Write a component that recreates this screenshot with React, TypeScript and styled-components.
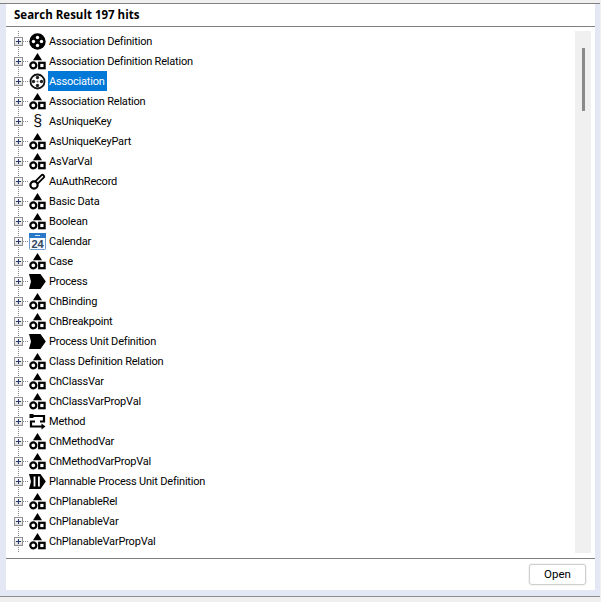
import React from 'react';
import styled, { createGlobalStyle } from 'styled-components';

const GlobalStyle = createGlobalStyle`
  html, body {
    margin: 0;
    padding: 0;
    background: #f0f0f0;
  }
`;

const Window = styled.div`
  width: 601px;
  height: 602px;
  box-sizing: border-box;
  display: flex;
  flex-direction: column;
  background: #f0f0f0;
  font-family: "Roboto", "Noto Sans", sans-serif;
  overflow: hidden;
`;

const Frame = styled.div`
  margin-top: 3px;
  height: 594px;
  box-sizing: border-box;
  border-top: 1px solid #808080;
  border-bottom: 1px solid #8c8c8c;
  background: #e3e8f4;
  padding: 0 5px 6px 6px;
  margin-right: 1px;
  display: flex;
`;

const Panel = styled.div`
  flex: 1;
  background: #fff;
  display: flex;
  flex-direction: column;
`;

const TitleBar = styled.div`
  height: 23px;
  box-sizing: border-box;
  border-bottom: 1px solid #808080;
  padding: 3px 0 0 8px;
  font-family: "Open Sans", sans-serif;
  font-size: 11.5px;
  line-height: 16px;
  font-weight: 700;
  color: #000;
`;

const Body = styled.div`
  flex: 1;
  display: flex;
  justify-content: space-between;
  padding: 4px 4px 4px 8px;
  border-bottom: 1px solid #808080;
  min-height: 0;
`;

const Tree = styled.ul`
  list-style: none;
  margin: 0;
  padding: 0;
  display: flex;
  flex-direction: column;
`;

const Row = styled.li`
  height: 20px;
  display: flex;
  align-items: center;
  font-size: 11px;
  letter-spacing: -0.2px;
  color: #000;
  white-space: nowrap;
`;

const Expander = styled.span`
  width: 15px;
  height: 20px;
  flex: none;
  display: flex;
  align-items: center;
  background-image:
    repeating-linear-gradient(to bottom, #8a8a8a 0 1px, transparent 1px 2px),
    repeating-linear-gradient(to right, #8a8a8a 0 1px, transparent 1px 2px);
  background-size: 1px 100%, 6px 1px;
  background-position: 4px 0, 9px 10px;
  background-repeat: no-repeat;
`;

const PlusBox = styled.span`
  width: 9px;
  height: 9px;
  box-sizing: border-box;
  border: 1px solid #8e8f8f;
  background: linear-gradient(#fdfdfd, #dcdcdc);
  margin-top: 1px;
  display: flex;
  align-items: center;
  justify-content: center;
  position: relative;

  &::before {
    content: '';
    width: 5px;
    height: 1px;
    background: #24356b;
  }

  &::after {
    content: '';
    position: absolute;
    width: 1px;
    height: 5px;
    left: 3px;
    top: 1px;
    background: #24356b;
  }
`;

const IconSlot = styled.span`
  width: 17px;
  height: 17px;
  flex: none;
  display: flex;
  align-items: center;
  justify-content: center;
  font-family: "Liberation Sans", sans-serif;
  font-size: 16px;
  color: #111;
  margin-right: 2px;
`;

const Label = styled.span<{ $selected?: boolean }>`
  height: 20px;
  line-height: 22px;
  padding: 0 2px 0 1px;
  background: ${(p) => (p.$selected ? '#0078d7' : 'transparent')};
  color: ${(p) => (p.$selected ? '#fff' : '#000')};
`;

const TreeTail = styled.span`
  display: block;
  width: 1px;
  height: 2px;
  margin-left: 4px;
  background-image: repeating-linear-gradient(to bottom, #8a8a8a 0 1px, transparent 1px 2px);
`;

const ScrollTrack = styled.div`
  width: 16px;
  height: 522px;
  background: #f0f0f0;
  display: flex;
  justify-content: center;
  padding-top: 17px;
  box-sizing: border-box;
`;

const ScrollThumb = styled.div`
  width: 3px;
  height: 63px;
  background: #8a8a8a;
`;

const Footer = styled.div`
  height: 31px;
  box-sizing: border-box;
  display: flex;
  justify-content: flex-end;
  padding: 5px 9px 0 0;
`;

const OpenButton = styled.button`
  width: 57px;
  height: 21px;
  box-sizing: border-box;
  padding: 0 0 2px;
  background: #fff;
  border: 1px solid #cfcfcf;
  border-radius: 3px;
  box-shadow: 0 0 0 1px #f4f4f4;
  font-family: inherit;
  font-size: 11.5px;
  color: #000;
`;

const ClassIcon = () => (
  <svg width="17" height="17" viewBox="0 0 17 17">
    <path d="M8.5 0 L13 7.2 H4 Z" fill="#000" />
    <circle cx="4.3" cy="12.3" r="3" fill="none" stroke="#000" strokeWidth="2.2" />
    <rect x="10.2" y="9.8" width="5.4" height="5.4" fill="none" stroke="#000" strokeWidth="2.2" />
  </svg>
);

const dots = [[8.5, 4.5], [4.5, 8.5], [12.5, 8.5], [8.5, 12.5]];

const AssocDefIcon = () => (
  <svg width="17" height="17" viewBox="0 0 17 17">
    <circle cx="8.5" cy="8.5" r="8.2" fill="#000" />
    {dots.map(([x, y]) => (
      <circle key={`${x}-${y}`} cx={x} cy={y} r="1.7" fill="#fff" />
    ))}
  </svg>
);

const AssocIcon = () => (
  <svg width="17" height="17" viewBox="0 0 17 17">
    <circle cx="8.5" cy="8.5" r="7" fill="#fff" stroke="#111" strokeWidth="1.8" />
    {dots.map(([x, y]) => (
      <circle key={`${x}-${y}`} cx={x} cy={y} r="1.7" fill="#222" />
    ))}
    <circle cx="8.5" cy="8.5" r="1" fill="#666" />
  </svg>
);

const KeyIcon = () => (
  <svg width="17" height="17" viewBox="0 0 17 17">
    <path d="M7.5 9.5 L13.5 3.5" stroke="#000" strokeWidth="5" fill="none" strokeLinecap="round" />
    <path d="M7.5 9.5 L13.5 3.5" stroke="#fff" strokeWidth="1.4" fill="none" strokeLinecap="round" />
    <circle cx="5" cy="12" r="3.6" fill="#fff" stroke="#000" strokeWidth="2.2" />
  </svg>
);

const CalendarIcon = () => (
  <svg width="17" height="17" viewBox="0 0 17 17">
    <rect x="0.5" y="0.5" width="16" height="16" rx="1" fill="#f7f9fc" stroke="#6f9bd1" />
    <rect x="0" y="0" width="17" height="5" fill="#2a78c8" />
    <rect x="6" y="2" width="5" height="1" fill="#cfe2f7" />
    <text x="8.5" y="15" textAnchor="middle" fontFamily="Liberation Sans, sans-serif" fontSize="11" fontWeight="700" fill="#33475f">24</text>
  </svg>
);

const ProcessIcon = () => (
  <svg width="17" height="17" viewBox="0 0 17 17">
    <path d="M0 1 H11.5 L16.8 8.5 L11.5 16 H0 L2 8.5 Z" fill="#000" />
  </svg>
);

const MethodIcon = () => (
  <svg width="17" height="17" viewBox="0 0 17 17">
    <path d="M2 3 H15 V8.5 H11" fill="none" stroke="#000" strokeWidth="2.2" />
    <path d="M6 8.5 H2 V13.5 H13" fill="none" stroke="#000" strokeWidth="2.2" />
    <rect x="0.5" y="1" width="4" height="4" fill="#000" />
    <path d="M12.5 10.5 L16.5 13.5 L12.5 16.5 Z" fill="#000" />
  </svg>
);

const PlannableIcon = () => (
  <svg width="17" height="17" viewBox="0 0 17 17">
    <path d="M0 1 H11.5 L16.8 8.5 L11.5 16 H0 L2 8.5 Z" fill="#000" />
    <rect x="4.6" y="3.5" width="1.8" height="10" fill="#fff" />
    <rect x="9" y="3.5" width="1.8" height="10" fill="#fff" />
  </svg>
);

const icons: Record<string, React.ReactNode> = {
  cls: <ClassIcon />,
  def: <AssocDefIcon />,
  assoc: <AssocIcon />,
  section: '§',
  key: <KeyIcon />,
  cal: <CalendarIcon />,
  proc: <ProcessIcon />,
  method: <MethodIcon />,
  plan: <PlannableIcon />,
};

const hits = [
  { name: 'Association Definition', icon: 'def' },
  { name: 'Association Definition Relation', icon: 'cls' },
  { name: 'Association', icon: 'assoc', selected: true },
  { name: 'Association Relation', icon: 'cls' },
  { name: 'AsUniqueKey', icon: 'section' },
  { name: 'AsUniqueKeyPart', icon: 'cls' },
  { name: 'AsVarVal', icon: 'cls' },
  { name: 'AuAuthRecord', icon: 'key' },
  { name: 'Basic Data', icon: 'cls' },
  { name: 'Boolean', icon: 'cls' },
  { name: 'Calendar', icon: 'cal' },
  { name: 'Case', icon: 'cls' },
  { name: 'Process', icon: 'proc' },
  { name: 'ChBinding', icon: 'cls' },
  { name: 'ChBreakpoint', icon: 'cls' },
  { name: 'Process Unit Definition', icon: 'proc' },
  { name: 'Class Definition Relation', icon: 'cls' },
  { name: 'ChClassVar', icon: 'cls' },
  { name: 'ChClassVarPropVal', icon: 'cls' },
  { name: 'Method', icon: 'method' },
  { name: 'ChMethodVar', icon: 'cls' },
  { name: 'ChMethodVarPropVal', icon: 'cls' },
  { name: 'Plannable Process Unit Definition', icon: 'plan' },
  { name: 'ChPlanableRel', icon: 'cls' },
  { name: 'ChPlanableVar', icon: 'cls' },
  { name: 'ChPlanableVarPropVal', icon: 'cls' },
];

const App: React.FC = () => (
  <Window>
    <GlobalStyle />
    <Frame>
      <Panel>
        <TitleBar>Search Result 197 hits</TitleBar>
        <Body>
          <Tree>
            {hits.map((hit) => (
              <Row key={hit.name}>
                <Expander>
                  <PlusBox />
                </Expander>
                <IconSlot>{icons[hit.icon]}</IconSlot>
                <Label $selected={hit.selected}>{hit.name}</Label>
              </Row>
            ))}
            <TreeTail />
          </Tree>
          <ScrollTrack>
            <ScrollThumb />
          </ScrollTrack>
        </Body>
        <Footer>
          <OpenButton>Open</OpenButton>
        </Footer>
      </Panel>
    </Frame>
  </Window>
);

export default App;
